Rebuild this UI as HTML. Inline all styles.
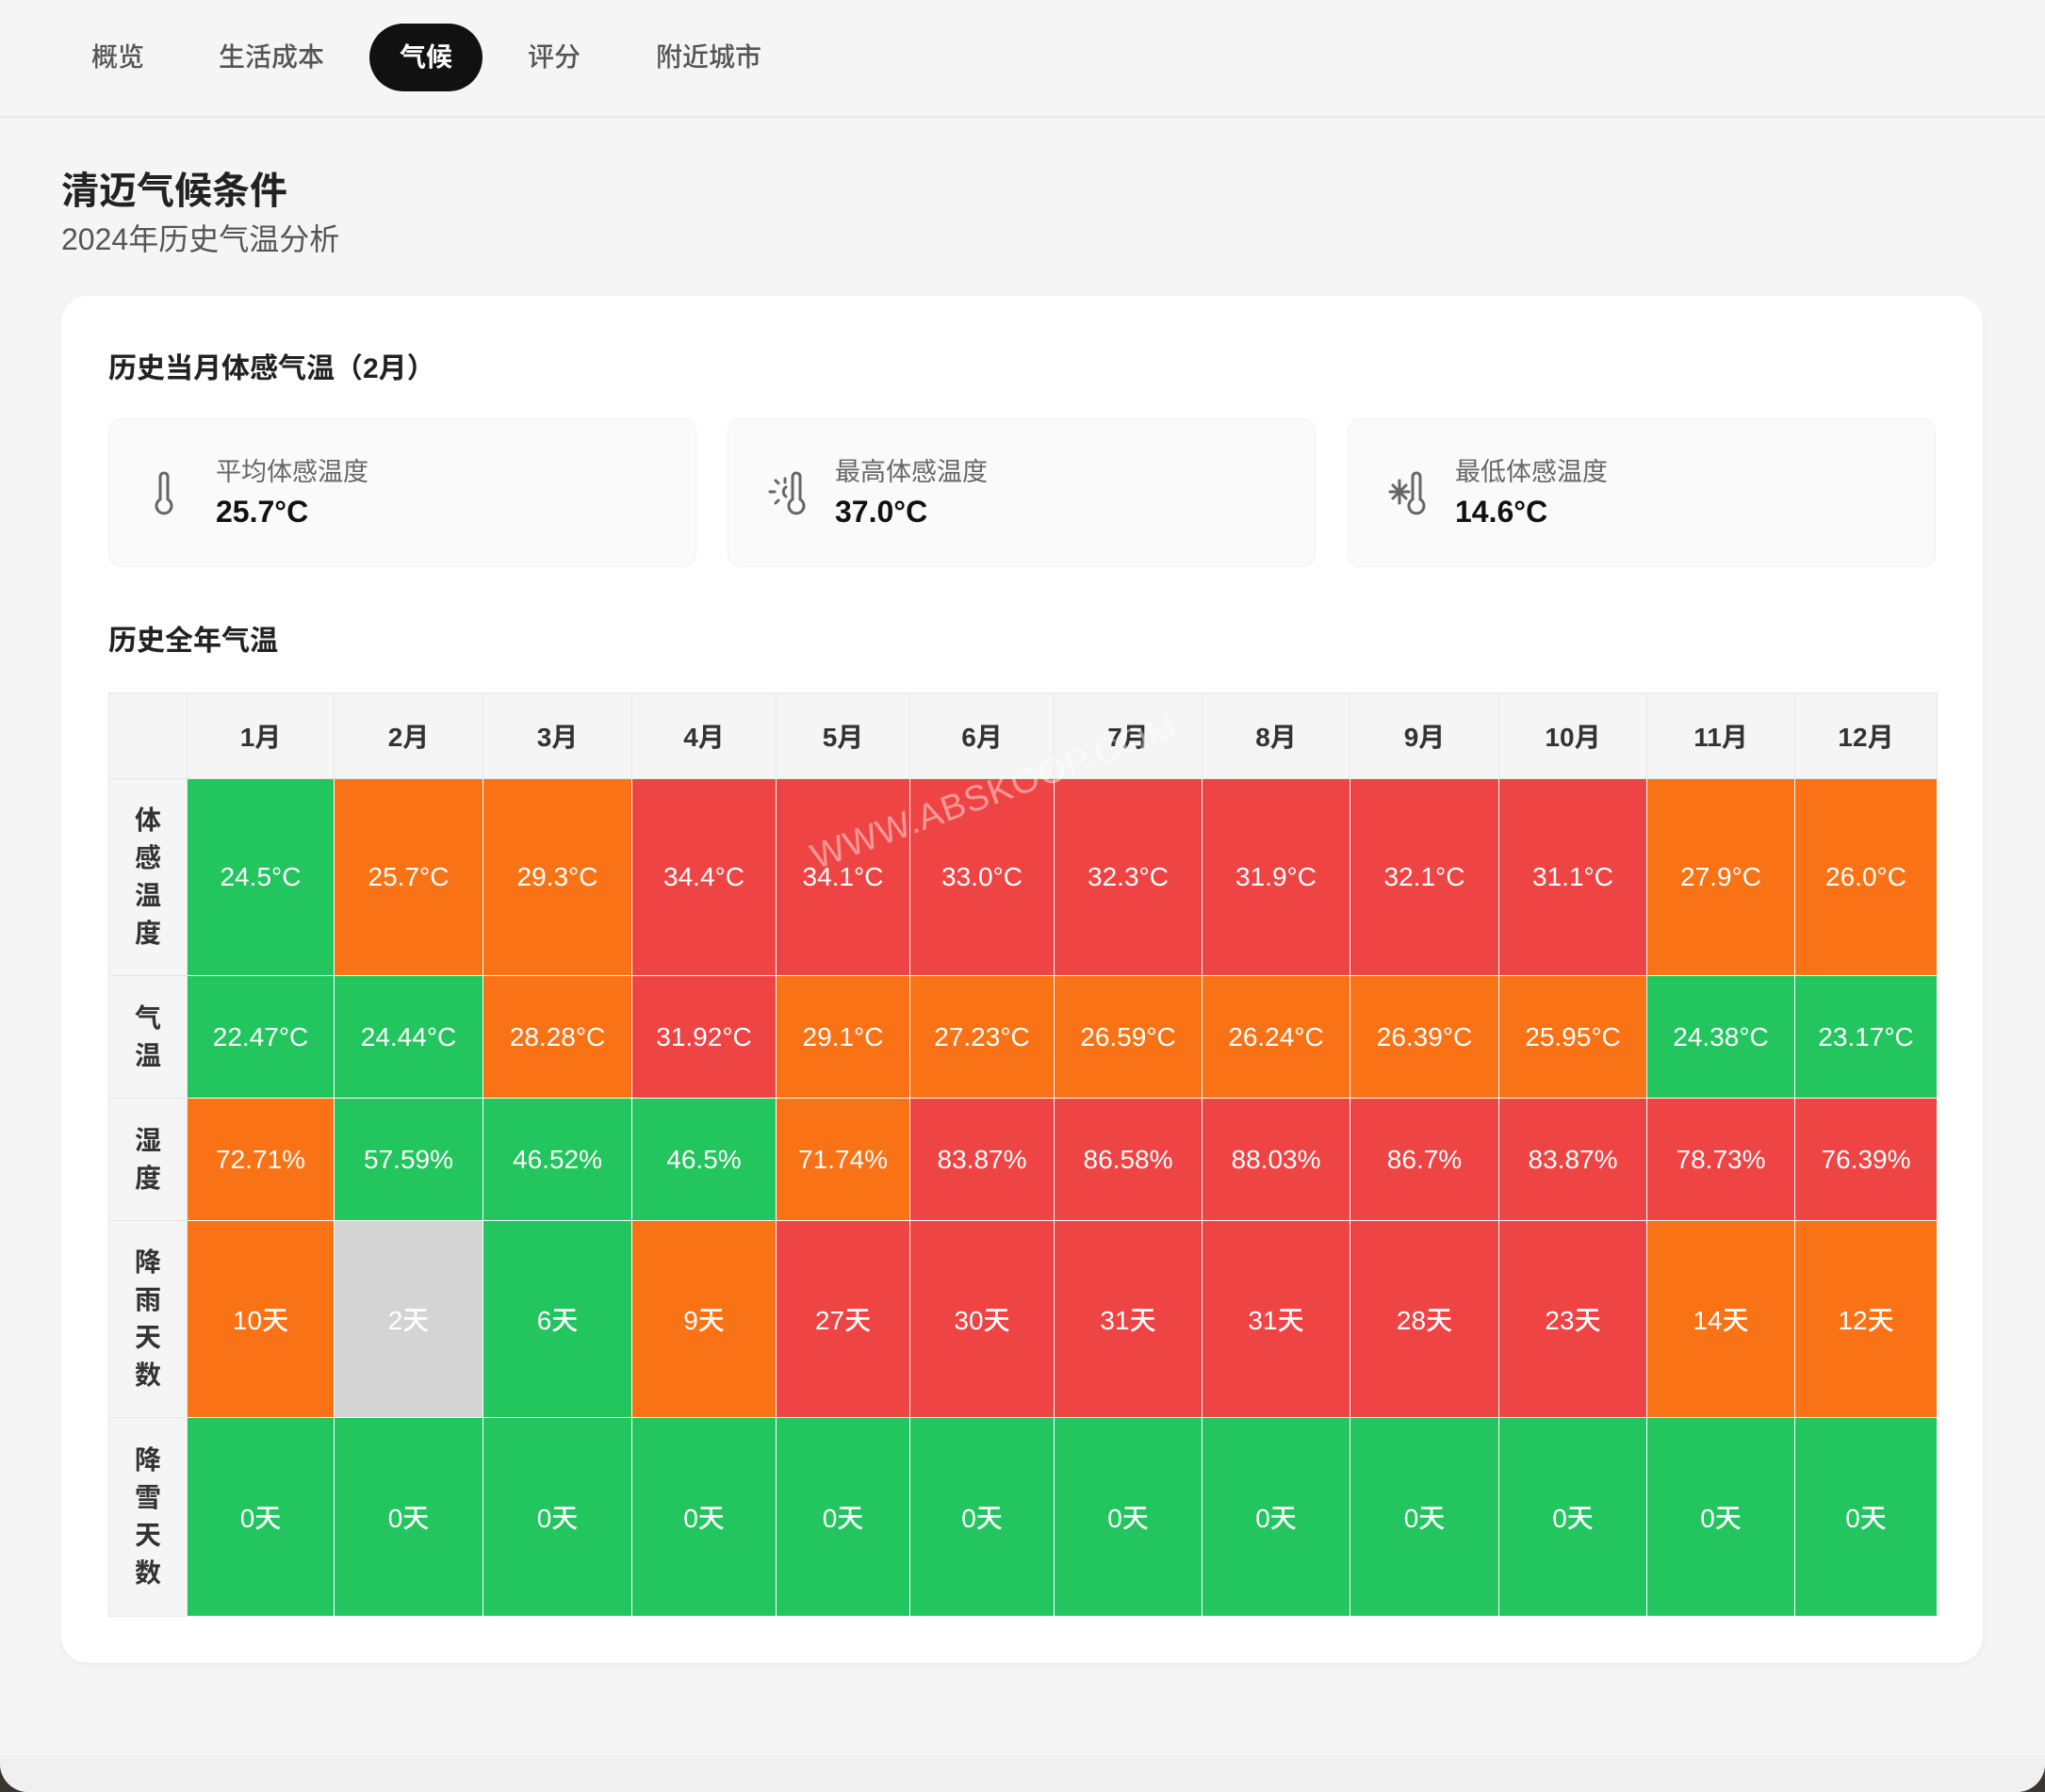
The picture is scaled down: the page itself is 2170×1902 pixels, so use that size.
<!DOCTYPE html>
<html><head><meta charset="utf-8">
<style>
*{margin:0;padding:0;box-sizing:border-box}
html,body{width:2170px;height:1902px;overflow:hidden;background:#3a3630}
body{font-family:"Liberation Sans","Noto Sans CJK SC",sans-serif}
.win{position:absolute;left:0;top:0;width:2170px;height:1902px;background:#f5f5f5;border-radius:0 0 30px 30px;overflow:hidden}
.bot{position:absolute;left:0;top:1863px;width:2170px;height:40px;background:#f0f0f0}
.nav{position:absolute;left:0;top:0;width:2170px;height:125px;border-bottom:2px solid #ececec;background:#f5f5f5}
.tab{position:absolute;top:25px;height:72px;line-height:72px;font-size:28px;color:#555;font-weight:500}
.tab.on{background:#111;color:#fff;border-radius:36px;width:120px;text-align:center;font-weight:700}
h1{position:absolute;left:65px;top:170px;font-size:40px;font-weight:700;color:#222}
.sub{position:absolute;left:65px;top:229px;font-size:32px;color:#555}
.card{position:absolute;left:65px;top:314px;width:2039px;height:1451px;background:#fff;border-radius:28px;box-shadow:0 2px 6px rgba(0,0,0,.05)}
.h2{position:absolute;font-size:30px;font-weight:700;color:#222}
.stat{position:absolute;top:444px;width:624px;height:158px;background:#fafafa;border:1px solid #f0f0f0;border-radius:14px}
.stat svg{position:absolute;left:40px;top:55px}
.stat .l{position:absolute;left:113px;top:34px;font-size:27px;color:#666}
.stat .v{position:absolute;left:113px;top:80px;font-size:32px;font-weight:700;color:#111}
table{position:absolute;left:115px;top:735px;border-collapse:collapse;table-layout:fixed}
td,th{text-align:center;color:#fff;font-size:28px;border:1px solid #fff;font-weight:500}
th{background:#f5f5f5;color:#333;font-weight:700;border:1px solid #e6e6e6;height:91px}
td.lab{background:#f5f5f5;color:#333;font-weight:700;line-height:40px;border:1px solid #e6e6e6}
.g{background:#22c55e}.o{background:#f97316}.r{background:#ef4444}.x{background:#d4d4d4}
.wm{position:absolute;left:850px;top:820px;font-size:38px;color:rgba(255,255,255,.45);transform:rotate(-20deg);letter-spacing:1px}
</style></head><body>
<div class="win">
<div class="nav">
<div class="tab" style="left:97px">概览</div>
<div class="tab" style="left:232px">生活成本</div>
<div class="tab on" style="left:392px">气候</div>
<div class="tab" style="left:560px">评分</div>
<div class="tab" style="left:696px">附近城市</div>
</div>
<h1>清迈气候条件</h1>
<div class="sub">2024年历史气温分析</div>
<div class="card"></div>
<div class="h2" style="left:115px;top:366px">历史当月体感气温（2月）</div>
<div class="stat" style="left:115px">
<svg width="36" height="50" viewBox="0 0 36 50" fill="none" stroke="#666" stroke-width="3" stroke-linecap="round"><path d="M14 6a4 4 0 0 1 8 0v24a8 8 0 1 1-8 0z"/></svg>
<div class="l">平均体感温度</div><div class="v">25.7°C</div></div>
<div class="stat" style="left:772px">
<svg width="50" height="50" viewBox="0 0 50 50" fill="none" stroke="#666" stroke-width="3" stroke-linecap="round"><path d="M28 6a4 4 0 0 1 8 0v24a8 8 0 1 1-8 0z"/><path d="M4 22h5M10 10l3 3M10 34l3-3M20 8v4M21 17a6 6 0 0 0 0 10"/></svg>
<div class="l">最高体感温度</div><div class="v">37.0°C</div></div>
<div class="stat" style="left:1430px">
<svg width="50" height="50" viewBox="0 0 50 50" fill="none" stroke="#666" stroke-width="3" stroke-linecap="round"><path d="M28 6a4 4 0 0 1 8 0v24a8 8 0 1 1-8 0z"/><path d="M14 10v24M4 22h20M7 15l14 14M7 29l14-14"/></svg>
<div class="l">最低体感温度</div><div class="v">14.6°C</div></div>
<div class="h2" style="left:115px;top:655px">历史全年气温</div>
<table>
<colgroup><col style="width:83px"><col style="width:156px"><col style="width:158px"><col style="width:158px"><col style="width:153px"><col style="width:142px"><col style="width:153px"><col style="width:157px"><col style="width:157px"><col style="width:158px"><col style="width:157px"><col style="width:157px"><col style="width:151px"></colgroup>
<tr><th></th><th>1月</th><th>2月</th><th>3月</th><th>4月</th><th>5月</th><th>6月</th><th>7月</th><th>8月</th><th>9月</th><th>10月</th><th>11月</th><th>12月</th></tr>
<tr style="height:209px"><td class="lab">体<br>感<br>温<br>度</td><td class="g">24.5°C</td><td class="o">25.7°C</td><td class="o">29.3°C</td><td class="r">34.4°C</td><td class="r">34.1°C</td><td class="r">33.0°C</td><td class="r">32.3°C</td><td class="r">31.9°C</td><td class="r">32.1°C</td><td class="r">31.1°C</td><td class="o">27.9°C</td><td class="o">26.0°C</td></tr>
<tr style="height:130px"><td class="lab">气<br>温</td><td class="g">22.47°C</td><td class="g">24.44°C</td><td class="o">28.28°C</td><td class="r">31.92°C</td><td class="o">29.1°C</td><td class="o">27.23°C</td><td class="o">26.59°C</td><td class="o">26.24°C</td><td class="o">26.39°C</td><td class="o">25.95°C</td><td class="g">24.38°C</td><td class="g">23.17°C</td></tr>
<tr style="height:130px"><td class="lab">湿<br>度</td><td class="o">72.71%</td><td class="g">57.59%</td><td class="g">46.52%</td><td class="g">46.5%</td><td class="o">71.74%</td><td class="r">83.87%</td><td class="r">86.58%</td><td class="r">88.03%</td><td class="r">86.7%</td><td class="r">83.87%</td><td class="r">78.73%</td><td class="r">76.39%</td></tr>
<tr style="height:209px"><td class="lab">降<br>雨<br>天<br>数</td><td class="o">10天</td><td class="x">2天</td><td class="g">6天</td><td class="o">9天</td><td class="r">27天</td><td class="r">30天</td><td class="r">31天</td><td class="r">31天</td><td class="r">28天</td><td class="r">23天</td><td class="o">14天</td><td class="o">12天</td></tr>
<tr style="height:211px"><td class="lab">降<br>雪<br>天<br>数</td><td class="g">0天</td><td class="g">0天</td><td class="g">0天</td><td class="g">0天</td><td class="g">0天</td><td class="g">0天</td><td class="g">0天</td><td class="g">0天</td><td class="g">0天</td><td class="g">0天</td><td class="g">0天</td><td class="g">0天</td></tr>
</table>
<div class="wm">WWW.ABSKOOP.COM</div>
<div class="bot"></div>
</div>
</body></html>
